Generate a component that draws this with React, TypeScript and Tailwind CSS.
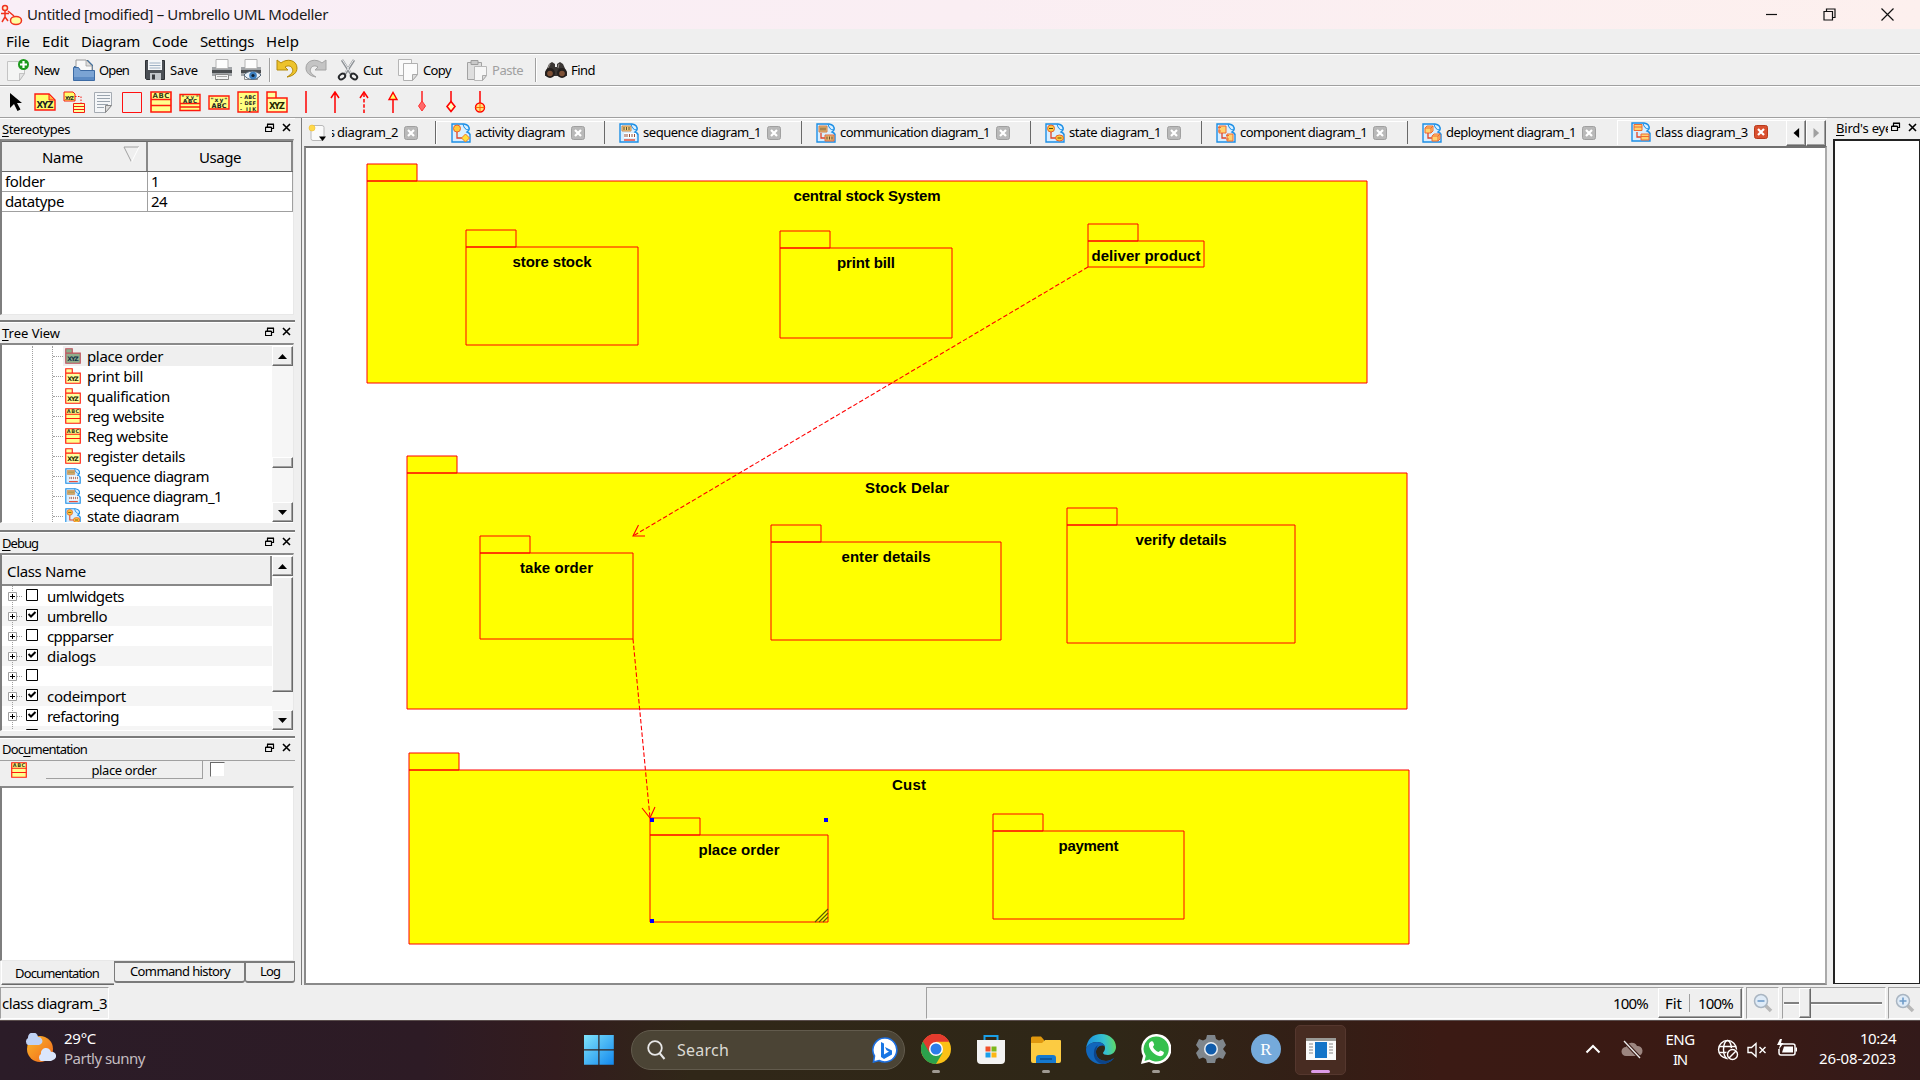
import React, { useLayoutEffect, useRef, useState } from "react";

/** Text run whose tracking is adjusted so that it fills a given width. */
function Fit({ w, children, className = "" }: { w: number; children: string; className?: string }) {
  const ref = useRef<HTMLSpanElement>(null);
  const [ls, setLs] = useState(0);
  useLayoutEffect(() => {
    if (ref.current) setLs((w - ref.current.getBoundingClientRect().width) / children.length);
  }, []);
  return (
    <span className={"block shrink-0 whitespace-pre " + className} style={{ width: w }}>
      <span ref={ref} style={{ letterSpacing: ls }}>{children}</span>
    </span>
  );
}

type SvgProps = { children: React.ReactNode; s?: number; vb?: string; className?: string };
function Svg({ children, s = 22, vb = "0 0 22 22", className = "" }: SvgProps) {
  return (
    <svg width={s} height={s} viewBox={vb} fill="none" className={"block shrink-0 " + className}>
      {children}
    </svg>
  );
}

/* ---------- toolbar icons ---------- */
const NewIcon = () => (
  <Svg>
    <path d="M.5 2.500h17v12l-5 7H.5z" fill="#f4f5f4" stroke="#c4c4c4" />
    <path d="M17.500 14.500h-5v7z" fill="#e4e4e4" stroke="#aaa" strokeWidth=".6" />
    <circle cx="16.500" cy="5.500" r="5.500" fill="#1c9a1c" />
    <path d="M16.500 2v7M13 5.500h7" stroke="#fff" strokeWidth="2.200" />
  </Svg>
);
const OpenIcon = () => (
  <Svg>
    <path d="M1 7h5V1h9l5 5v9H1z" fill="#41719f" />
    <path d="M3 11V1h10l6 6v6z" fill="#f8f8f8" stroke="#9a9a9a" />
    <path d="M13 1v6h6z" fill="#ddd" stroke="#999" strokeWidth=".7" />
    <path d="M.5 21.500V8.500h5l2 3h14v10z" fill="#7ba4d4" stroke="#3d6ba4" />
    <path d="M1 18h20v3H1z" fill="#5c8bc4" />
  </Svg>
);
const SaveIcon = () => (
  <Svg>
    <path d="M1.500 1.500h19v19h-18l-1-1z" fill="#4b4f55" stroke="#2e3135" />
    <path d="M4 1h14v10H4z" fill="#f4f6f8" />
    <path d="M5.500 4h11M5.500 6.500h11M5.500 9h11" stroke="#9db0c4" />
    <path d="M6 14h11v7H6z" fill="#c3c7cc" />
    <path d="M8 15.500h3v5H8z" fill="#3a3d42" />
  </Svg>
);
const Printer = () => (
  <>
    <path d="M5 .5h12v9H5z" fill="#fdfdfd" stroke="#b4b4b4" />
    <path d="M1 8h4v2h12V8h4v9H1z" fill="#a2a5a8" />
    <path d="M1 11h20v3H1z" fill="#4a4d50" />
    <path d="M4.500 15.500h13v5h-13z" fill="#f3f3f3" stroke="#888" />
    <path d="M6 17.500h10" stroke="#aaa" />
  </>
);
const PrintIcon = () => <Svg><Printer /></Svg>;
const PreviewIcon = () => (
  <Svg>
    <Printer />
    <path d="M4 16c4-5 12-5 17 0-5 6-13 6-17 0z" fill="#e8f0f8" stroke="#567" />
    <circle cx="13" cy="16.500" r="3.800" fill="#3c7fc0" /><circle cx="13" cy="16.500" r="1.600" fill="#123" />
  </Svg>
);
const UndoIcon = ({ gray }: { gray?: boolean }) => (
  <Svg className={gray ? "-scale-x-100" : ""}>
    <path d="M1 1l4 3c6-5 16-3 16 5 0 5-4 8-10 9 5-3 7-6 5-9-1-2-4-3-7-1l3 3H1z" fill={gray ? "#c4c4c4" : "#edc32c"} stroke={gray ? "#a4a4a4" : "#b48a0c"} />
  </Svg>
);
const CutIcon = () => (
  <Svg>
    <path d="M5 1l9 14M17 1L8 15" stroke="#8f9397" strokeWidth="2.600" />
    <path d="M5.500 1l8.500 13M16.500 1L8 14" stroke="#e8eaec" strokeWidth="1" />
    <ellipse cx="5" cy="17.500" rx="3.400" ry="2.500" stroke="#26282b" strokeWidth="2" transform="rotate(-35 5 17.500)" />
    <ellipse cx="17" cy="17.500" rx="3.400" ry="2.500" stroke="#26282b" strokeWidth="2" transform="rotate(35 17 17.500)" />
  </Svg>
);
const CopyIcon = () => (
  <Svg>
    <path d="M1.500 .5h13v16h-13z" fill="#fafafa" stroke="#b5b5b5" />
    <path d="M6.500 4.500h14v11l-5 6h-9z" fill="#fbfbfb" stroke="#b0b0b0" />
    <path d="M20.500 15.500h-5v6z" fill="#ddd" stroke="#aaa" />
  </Svg>
);
const PasteIcon = () => (
  <Svg>
    <path d="M1.500 3.500h14v17h-14z" fill="#dedede" stroke="#a2a2a2" />
    <path d="M5 1.500h7v4H5z" fill="#c9c9c9" stroke="#9c9c9c" />
    <path d="M8.500 7.500h12v9l-4 5h-8z" fill="#f6f6f6" stroke="#b8b8b8" />
    <path d="M20.500 16.500h-4v5z" fill="#ddd" stroke="#aaa" />
  </Svg>
);
const FindIcon = () => (
  <Svg>
    <path d="M4 5l3-2 3 2v3h2V5l3-2 3 2 4 9v3H0v-3z" fill="#3a3634" />
    <circle cx="5" cy="14" r="5" fill="#241f1d" /><circle cx="17" cy="14" r="5" fill="#241f1d" />
    <circle cx="5" cy="14.500" r="2.800" fill="#7e5136" /><circle cx="17" cy="14.500" r="2.800" fill="#7e5136" />
    <path d="M5 5l-2 4M14 5l-1 4" stroke="#99928e" />
  </Svg>
);

const tiny = "font-['DejaVu_Sans'] font-bold";
const Pkg = ({ s = 22, sel }: { s?: number; sel?: boolean }) => (
  <Svg s={s}>
    <path d="M1 1h9v6H1zM1 7h20v14H1z" fill={sel ? "#8fae8c" : "#ffff9c"} stroke={sel ? "#c0505c" : "#ff1a0e"} strokeWidth="1.500" />
    <text x="11" y="18" textAnchor="middle" fontSize="8.500" textLength="16" fill={sel ? "#123048" : "#2a2a00"} className={tiny}>XYZ</text>
  </Svg>
);
const Cls = ({ s = 22 }: { s?: number }) => (
  <Svg s={s}>
    <path d="M1 1h20v20H1z" fill="#ffff8c" stroke="#ff1a0e" strokeWidth="1.600" />
    <path d="M1 8.500h20M1 14.500h20" stroke="#ff1a0e" strokeWidth="1.400" />
    <text x="11" y="7.300" textAnchor="middle" fontSize="7" textLength="17" fill="#3a3a10" className={tiny}>ABC</text>
  </Svg>
);
const Note = () => (
  <>
    <path d="M1 3h14l6 6v10H1z" fill="#ffff6a" stroke="#ff1b12" strokeWidth="1.400" />
    <path d="M15 3v6h6z" fill="#ffb347" stroke="#ff1b12" />
  </>
);

const shapeTools: React.ReactNode[] = [
  <Svg key="a"><path d="M5 2v15l4-4 3.500 7 3-1.500-3.500-6.500h5z" fill="#000" /></Svg>,
  <Svg key="b"><Note /><text x="11" y="17" textAnchor="middle" fontSize="8.500" textLength="17" fill="#222" className={tiny}>XYZ</text></Svg>,
  <Svg key="c">
    <path d="M1 1h9l2 2v7H1z" fill="#ffff6a" stroke="#f51b12" />
    <text x="6.500" y="8.500" textAnchor="middle" fontSize="5" textLength="9" fill="#222" className={tiny}>XYZ</text>
    <path d="M12 5.500h6v7" stroke="#f51b12" strokeDasharray="1.500 1.500" />
    <path d="M10.500 12.500h11v9h-11zM10.500 15.500h11M10.500 18.500h11" fill="#ffff9a" stroke="#f51b12" />
  </Svg>,
  <Svg key="d">
    <path d="M2.500 1.500h17v13l-6 7h-11z" fill="#f4f6f8" stroke="#a5abb2" />
    <path d="M5 4.500h13M5 7.500h13M5 10.500h13M5 13.500h11M5 16.500h7" stroke="#9aa4ae" />
    <path d="M19.500 14.500h-6v7z" fill="#ddd" stroke="#888" />
  </Svg>,
  <Svg key="e"><path d="M1.500 1.500h19v20h-19z" stroke="#ff1010" /></Svg>,
  <Cls key="f" />,
  <Svg key="g">
    <path d="M1 3.500h20v16H1zM1 12.500h20M1 16h20" fill="#ffff80" stroke="#ff1a0e" strokeWidth="1.400" />
    <text x="11" y="8" textAnchor="middle" fontSize="5" textLength="17" fill="#222" className={tiny}>"xy"</text>
    <text x="11" y="12" textAnchor="middle" fontSize="5.500" textLength="14" fill="#222" className={tiny}>ABC</text>
  </Svg>,
  <Svg key="h">
    <path d="M1 5h20v13H1z" fill="#ffff80" stroke="#ff1a0e" strokeWidth="1.400" />
    <text x="11" y="11" textAnchor="middle" fontSize="6" textLength="17" fill="#222" className={tiny}>"xy"</text>
    <text x="11" y="17" textAnchor="middle" fontSize="6.500" textLength="15" fill="#222" className={tiny}>ABC</text>
  </Svg>,
  <Svg key="i">
    <path d="M1 1h20v20H1z" fill="#ffff80" stroke="#ff1a0e" strokeWidth="1.400" />
    <text x="3" y="7.500" fontSize="5" textLength="16" fill="#222" className={tiny}>- ABC</text>
    <text x="3" y="13.500" fontSize="5" textLength="16" fill="#222" className={tiny}>- DEF</text>
    <text x="3" y="19.500" fontSize="5" textLength="16" fill="#222" className={tiny}>- IJK</text>
  </Svg>,
  <Pkg key="j" />,
  <Svg key="k"><path d="M11 0v22" stroke="#f00" strokeWidth="1.500" /></Svg>,
  <Svg key="l"><path d="M11 22V1M7 7l4-6 4 6" stroke="#f00" strokeWidth="1.500" /></Svg>,
  <Svg key="m"><path d="M11 22V1" stroke="#f00" strokeWidth="1.500" strokeDasharray="3.500 1.800" /><path d="M7 7l4-6 4 6" stroke="#f00" strokeWidth="1.500" /></Svg>,
  <Svg key="n"><path d="M11 22V8" stroke="#f00" strokeWidth="1.500" /><path d="M7 8.500l4-7 4 7z" fill="#ffff6a" stroke="#f00" strokeWidth="1.400" /></Svg>,
  <Svg key="o"><path d="M11 0v12" stroke="#f00" strokeWidth="1.300" /><path d="M11 10l3.500 5-3.500 5-3.500-5z" fill="#ff6b6b" stroke="#f33" /></Svg>,
  <Svg key="p"><path d="M11 0v11" stroke="#f00" strokeWidth="1.500" /><path d="M11 10.500l4 5-4 5-4-5z" fill="#ffffc0" stroke="#f00" strokeWidth="1.600" /></Svg>,
  <Svg key="q"><path d="M11 0v12" stroke="#f00" strokeWidth="1.500" /><circle cx="11" cy="16.500" r="4.500" fill="#ffe27a" stroke="#f00" strokeWidth="1.400" /><path d="M11 12v9M6.500 16.500h9" stroke="#f60" /></Svg>,
];

/* ---------- diagram document icons ---------- */
type Kind = "activity" | "sequence" | "communication" | "state" | "component" | "deployment" | "class";
function DiagramIcon({ kind, s = 20 }: { kind: Kind; s?: number }) {
  return (
    <Svg s={s} vb="0 0 20 20">
      <path d="M1 1h12q6 1 5 6l-2 2q3 1 3 3v7H1z" fill="#d9efff" stroke="#1d8fe6" strokeWidth="1.400" />
      <path d="M12 1q1 6 6 6l-2 2q3 1 3 3" stroke="#1d8fe6" fill="#9fd3ff" />
      {(kind === "activity" || kind === "state") && (
        <>
          <circle cx="6" cy="5.500" r="3.500" fill="#ffc93a" stroke="#e8622c" />
          <path d="M6 9v6h5" stroke="#e0442a" strokeWidth="1.300" />
          {kind === "activity" ? <path d="M14.500 11l4 4-4 4-4-4z" fill="#ffe03a" stroke="#f0782c" /> : <ellipse cx="14.500" cy="15" rx="4" ry="3" fill="#ffc93a" stroke="#e8622c" />}
          {kind === "state" && <path d="M4 5.500h4M12.500 15h4" stroke="#5b4b10" />}
        </>
      )}
      {kind === "sequence" && (
        <>
          <path d="M3 3h9v5H3z" fill="#f5cf7a" stroke="#c98a52" /><path d="M5 4v3M7.500 4v3M10 4v3" stroke="#5b4b30" />
          <path d="M5 10h12v5H5z" fill="#fff" /><path d="M6 11v3M8 11v3M10.500 11v3M13 11v3M15.500 11v3" stroke="#93503f" />
          <path d="M5 17h11" stroke="#e8503a" strokeWidth="1.500" />
        </>
      )}
      {kind === "communication" && (
        <>
          <path d="M3 3h8v6H3z" fill="#e8b870" stroke="#d08050" /><path d="M5 4.500v3M7 4.500v3M9 4.500v3" stroke="#665030" />
          <path d="M5 10v5h4" stroke="#e0442a" strokeWidth="1.300" /><path d="M9 12h9v6H9z" fill="#e8b870" stroke="#e06a40" /><path d="M11 13.500v3M13.500 13.500v3M16 13.500v3" stroke="#665030" />
        </>
      )}
      {(kind === "component" || kind === "deployment" || kind === "class") && (
        <>
          <path d={kind === "component" ? "M3 3h7v7H3zM2 4.500h3M2 8h3" : kind === "deployment" ? "M3 5l2-2h6v5l-2 2H3zM3 5h6v5M9 5l2-2" : "M3 2.500h8v6H3zM3 5h8"} fill="#ffd36e" stroke="#ee6a35" />
          <path d="M6 10v5h4" stroke="#e0442a" strokeWidth="1.300" />
          <path d={kind === "component" ? "M11 11h6v7h-6zM10 12.500h3M10 16h3" : kind === "deployment" ? "M10 13l2-2h6v5l-2 2h-6zM10 13h6v5M16 13l2-2" : "M10 12h8v6h-8zM10 14.500h8"} fill="#ffd36e" stroke="#ee6a35" />
        </>
      )}
    </Svg>
  );
}

/* ---------- dock helpers ---------- */
const RestoreGlyph = () => (
  <Svg s={10} vb="0 0 10 10"><path d="M2.500 4V1.500h6v4H7M2 1h7" stroke="#000" strokeWidth="1.200" /><path d="M.500 4.500h6v4h-6zM.500 4h6" stroke="#000" strokeWidth="1.200" /></Svg>
);
const CloseGlyph = () => <Svg s={9} vb="0 0 9 9"><path d="M1 1l7 7M8 1L1 8" stroke="#000" strokeWidth="1.600" /></Svg>;

function DockTitle({ text, hot, w }: { text: string; hot: number; w: number }) {
  const ref = useRef<HTMLSpanElement>(null);
  const [ls, setLs] = useState(0);
  useLayoutEffect(() => {
    if (ref.current) setLs((w - ref.current.getBoundingClientRect().width) / text.length);
  }, []);
  return (
    <div className="flex h-[20px] shrink-0 items-center pl-[2px] text-[13px] leading-[20px]">
      <span className="whitespace-pre" style={{ width: w }}>
        <span ref={ref} style={{ letterSpacing: ls }}>
          {text.slice(0, hot)}<span className="underline underline-offset-2">{text[hot]}</span>{text.slice(hot + 1)}
        </span>
      </span>
      <div className="ml-auto flex items-center gap-[7px] pr-[4px] pb-[3px]"><RestoreGlyph /><CloseGlyph /></div>
    </div>
  );
}
const Split = () => <div className="h-[3px] shrink-0 border-t-2 border-[#7b7b7b] bg-white" />;
const raised = "border border-t-white border-l-white border-r-[#696969] border-b-[#696969] shadow-[inset_-1px_-1px_0_#a0a0a0] bg-[#efefef]";
const sunken = "border border-t-[#a0a0a0] border-l-[#a0a0a0] border-r-white border-b-white";

function ScrollBar({ before, thumb }: { before: string; thumb: string }) {
  return (
    <div className="flex w-[21px] shrink-0 flex-col bg-[#f6f6f6]">
      <div className={"flex h-[20px] items-center justify-center " + raised}><Svg s={9} vb="0 0 9 9"><path d="M0 7l4.500-5L9 7z" fill="#000" /></Svg></div>
      <div className={before} />
      <div className={raised + " " + thumb} />
      <div className="flex-1" />
      <div className={"flex h-[20px] items-center justify-center " + raised}><Svg s={9} vb="0 0 9 9"><path d="M0 2l4.500 5L9 2z" fill="#000" /></Svg></div>
    </div>
  );
}

const tree: [string, number, React.ReactNode][] = [
  ["place order", 76, <Pkg s={16} sel />],
  ["print bill", 56, <Pkg s={16} />],
  ["qualification", 83, <Pkg s={16} />],
  ["reg website", 77, <Cls s={16} />],
  ["Reg website", 81, <Cls s={16} />],
  ["register details", 98, <Pkg s={16} />],
  ["sequence diagram", 122, <DiagramIcon kind="sequence" s={16} />],
  ["sequence diagram_1", 135, <DiagramIcon kind="sequence" s={16} />],
  ["state diagram", 92, <DiagramIcon kind="state" s={16} />],
];
const debugRows: [string, number, boolean][] = [
  ["umlwidgets", 77, false], ["umbrello", 60, true], ["cppparser", 66, false], ["dialogs", 49, true],
  ["", 0, false], ["codeimport", 79, true], ["refactoring", 72, true], ["", 0, false],
];

function LeftDock() {
  return (
    <div className="flex w-[295px] shrink-0 flex-col">
      {/* Stereotypes */}
      <div className="h-px shrink-0 bg-white" />
      <DockTitle text="Stereotypes" hot={0} w={68} />
      <div className="mr-[1px] flex h-[176px] shrink-0 flex-col border-t-2 border-r border-b border-l-2 border-t-[#8a8a8a] border-r-[#e8e8e8] border-b-[#e8e8e8] border-l-[#7e7e7e] bg-white text-[15px]">
        <div className="h-px shrink-0 bg-[#696969]" />
        <div className="flex h-[30px] shrink-0 border-b border-[#696969]">
          <div className="flex w-[146px] items-center border-r-2 border-[#888] bg-[#efefef] pt-px pl-[40px]">
            <Fit w={41}>Name</Fit>
            <Svg s={17} vb="0 0 17 17" className="mb-[6px] ml-[40px]"><path d="M8.500 16L1 1h15" stroke="#a0a0a0" /><path d="M16 1L8.500 16" stroke="#fff" /></Svg>
          </div>
          <div className="flex flex-1 items-center border-r-2 border-[#888] bg-[#efefef] pt-px pl-[51px]"><Fit w={42}>Usage</Fit></div>
        </div>
        {([["folder", 40, "1", 8], ["datatype", 59, "24", 16]] as [string, number, string, number][]).map(([a, aw, b, bw]) => (
          <div key={a} className="flex h-[20px] shrink-0 border-b border-[#a0a0a0] leading-[18px]">
            <div className="w-[146px] border-r border-[#a0a0a0] pl-[3px]"><Fit w={aw}>{a}</Fit></div>
            <div className="flex-1 border-r border-[#a0a0a0] pl-[3px]"><Fit w={bw}>{b}</Fit></div>
          </div>
        ))}
      </div>
      <div className="h-[5px] shrink-0" />
      <Split />
      {/* Tree view */}
      <DockTitle text="Tree View" hot={0} w={58} />
      <div className="mr-[1px] flex h-[180px] shrink-0 border-t-2 border-l-2 border-r border-b border-t-[#8a8a8a] border-r-[#e8e8e8] border-b-[#fff] border-l-[#7e7e7e] bg-white pt-px text-[15px]">
        <div className="flex min-w-0 flex-1 overflow-hidden">
          <div className="ml-[30px] w-[20px] shrink-0 border-l border-dotted border-[#a0a0a0]" />
          <div className="flex-1 border-l border-dotted border-[#a0a0a0]">
            {tree.map(([t, w, icon], i) => (
              <div key={i} className="flex h-[20px] items-center leading-[20px]">
                <div className="w-[10px] border-t border-dotted border-[#a0a0a0]" />
                <div className={"flex h-full flex-1 items-center pl-[2px] " + (i === 0 ? "bg-[#efefef]" : "")}>
                  {icon}
                  <Fit w={w} className="ml-[6px]">{t}</Fit>
                </div>
              </div>
            ))}
          </div>
        </div>
        <ScrollBar before="h-[91px]" thumb="h-[11px]" />
      </div>
      <div className="h-[7px] shrink-0" />
      <Split />
      {/* Debug */}
      <DockTitle text="Debug" hot={0} w={36} />
      <div className="mr-[1px] flex h-[178px] shrink-0 border-t-2 border-l-2 border-r border-b border-t-[#8a8a8a] border-r-[#e8e8e8] border-b-[#fff] border-l-[#7e7e7e] bg-white pt-px text-[15px]">
        <div className="flex min-w-0 flex-1 flex-col overflow-hidden">
          <div className="flex h-[30px] shrink-0 items-center border-r-2 border-b-2 border-[#888] bg-[#efefef] pt-[2px] pl-[5px]"><Fit w={79}>Class Name</Fit></div>
          {debugRows.map(([t, w, on], i) => (
            <div key={i} className={"flex h-[20px] shrink-0 items-center leading-[20px] " + (i % 2 ? "bg-[#f5f5f5]" : "bg-white")}>
              <Svg s={20} vb="0 0 20 20">
                <path d="M10.500 0v20M15 10.500h5" stroke="#a0a0a0" strokeDasharray="1 1" />
                <path d="M6.500 6.500h8v8h-8z" fill="#fff" stroke="#a0a0a0" />
                <path d="M8 10.500h5M10.500 8v5" stroke="#000" />
              </Svg>
              <Svg s={12} vb="0 0 12 12" className="mb-[3px] ml-[4px]">
                <path d="M.500.500h11v11H.500z" fill="#fff" stroke="#000" />
                {on && <path d="M2.500 5l2.500 2.500L9.500 3" stroke="#000" strokeWidth="2" />}
              </Svg>
              {t ? <Fit w={w} className="ml-[9px]">{t}</Fit> : null}
            </div>
          ))}
        </div>
        <ScrollBar before="h-[1px]" thumb="h-[115px]" />
      </div>
      <div className="h-[5px] shrink-0" />
      <Split />
      {/* Documentation */}
      <DockTitle text="Documentation" hot={3} w={85} />
      <div className="mt-px flex h-[26px] shrink-0 items-start border-t border-[#a0a0a0] pl-[11px] text-[13px]">
        <div className="pt-px"><Cls s={16} /></div>
        <div className="ml-[19px] flex h-[18px] w-[157px] items-center justify-center border-r border-b border-[#a0a0a0] pt-[2px]"><Fit w={65}>place order</Fit></div>
        <div className="mt-px ml-[7px] h-[15px] w-[15px] border border-t-[#696969] border-r-[#eee] border-b-[#eee] border-l-[#696969] bg-white" />
      </div>
      <div className="mr-[1px] h-[175px] shrink-0 border-t-2 border-l-2 border-r border-b border-t-[#8a8a8a] border-r-[#e8e8e8] border-b-[#e8e8e8] border-l-[#7e7e7e] bg-white" />
      <div className="flex h-[24px] shrink-0 items-start pl-[1px] text-[13px]">
        <div className="flex h-[24px] w-[113px] items-center border-b border-l border-b-[#696969] border-l-white pt-[2px] pl-[13px] shadow-[inset_0_-1px_0_#a0a0a0]"><Fit w={84}>Documentation</Fit></div>
        <div className="flex h-[22px] w-[131px] items-center rounded-b-[3px] border-x border-t-2 border-b-2 border-[#7b7b7b] pl-[15px]"><Fit w={100}>Command history</Fit></div>
        <div className="flex h-[22px] flex-1 items-center rounded-b-[3px] border-x border-t-2 border-b-2 border-[#7b7b7b] pl-[14px]"><Fit w={20}>Log</Fit></div>
      </div>
    </div>
  );
}

/* ---------- tabs ---------- */
const tabs: [string, number, Kind, string][] = [
  ["activity diagram", 90, "activity", "w-[168px]"],
  ["sequence diagram_1", 118, "sequence", "w-[197px]"],
  ["communication diagram_1", 150, "communication", "w-[229px]"],
  ["state diagram_1", 92, "state", "w-[171px]"],
  ["component diagram_1", 127, "component", "w-[206px]"],
  ["deployment diagram_1", 130, "deployment", "w-[209px]"],
];
const TabClose = ({ red }: { red?: boolean }) => (
  <Svg s={14} vb="0 0 14 14">
    <rect x=".5" y=".5" width="13" height="13" rx="2" fill={red ? "#d9502f" : "#b9b9b9"} stroke={red ? "#b93a1c" : "#a0a0a0"} />
    <path d="M4 4l6 6M10 4l-6 6" stroke="#fff" strokeWidth="2.200" />
  </Svg>
);

/* ---------- diagram ---------- */
type Node = [string, number, number, number, number, number];
const nodes: Node[] = [
  ["central stock System", 367, 164, 1367, 383, 147],
  ["store stock", 466, 230, 638, 345, 79],
  ["print bill", 780, 231, 952, 338, 58],
  ["deliver product", 1088, 224, 1204, 267, 109],
  ["Stock Delar", 407, 456, 1407, 709, 84],
  ["take order", 480, 536, 633, 639, 73],
  ["enter details", 771, 525, 1001, 640, 89],
  ["verify details", 1067, 508, 1295, 643, 91],
  ["Cust", 409, 753, 1409, 944, 34],
  ["place order", 650, 818, 828, 922, 81],
  ["payment", 993, 814, 1184, 919, 60],
];
function Diagram() {
  return (
    <svg width="1518" height="834" viewBox="307 149 1518 834" className="block" fontFamily="'Liberation Sans', Arial, sans-serif">
      {nodes.map(([t, x, y, r, b, w]) => (
        <g key={t}>
          <path d={`M${x} ${y}h50v17h-50zM${x} ${y + 17}H${r}V${b}H${x}z`} fill="#ff0" stroke="#f00" />
          <text x={(x + r) / 2 - w / 2} y={y + 37} fontSize="15" fontWeight="bold" textLength={w}>{t}</text>
        </g>
      ))}
      <g stroke="#f00" strokeWidth="1.100" fill="none">
        <path d="M1088 267L633 536M633 639l17 179" strokeDasharray="4.500 2.200" />
        <path d="M638.500 525L633 536l12 0M642 808l8 10 5-11" />
      </g>
      <path d="M650 818h4v4h-4zM824 818h4v4h-4zM650 919h4v4h-4z" fill="#00f" />
      <path d="M815 922l13-13M819 922l9-9M823 922l5-5" stroke="#5c5c00" strokeWidth="1.200" />
    </svg>
  );
}

function Center() {
  return (
    <div className="ml-[6px] flex w-[1526px] shrink-0 flex-col border-l border-[#7b7b7b]">
      <div className="h-px shrink-0 bg-white" />
      <div className="flex h-[27px] shrink-0 items-center pl-px text-[13px]">
        <Svg s={20} vb="0 0 20 20" className="ml-[5px]">
          <rect x="3" y="2.500" width="13" height="15" rx="2" fill="#fafafa" stroke="#b8b8b8" />
          <circle cx="4" cy="5" r="3" fill="#ffd94a" stroke="#eebc2c" strokeWidth=".6" />
          <path d="M11 13.500h7L14.500 18z" fill="#000" />
        </Svg>
        <div className="ml-[4px] flex w-[3px] justify-end overflow-hidden pt-px"><span>s</span></div>
        <Fit w={61} className="ml-[2px] pt-px">diagram_2</Fit>
        <div className="ml-[6px]"><TabClose /></div>
        <div className="ml-[17px] h-[23px] w-[2px] border-l border-[#696969] bg-white" />
        {tabs.map(([t, w, k, cw], i) => (
          <div key={t} className={"flex h-[23px] shrink-0 items-center pl-[14px] " + cw + (i < 5 ? " border-r border-[#696969] shadow-[inset_0_1px_0_#fff]" : "")}>
            <DiagramIcon kind={k} />
            <Fit w={w} className="ml-[4px] pt-px">{t}</Fit>
            <div className="ml-[6px]"><TabClose /></div>
          </div>
        ))}
        <div className="flex h-[25px] w-[169px] shrink-0 items-center border-t border-l border-white pl-[13px] pb-[2px]">
          <DiagramIcon kind="class" />
          <Fit w={93} className="ml-[4px] pt-px">class diagram_3</Fit>
          <div className="ml-[6px]"><TabClose red /></div>
        </div>
        <div className={"flex h-[26px] w-[20px] shrink-0 items-center justify-center " + raised}><Svg s={10} vb="0 0 8 8"><path d="M6.500 0v8L2 4z" fill="#000" /></Svg></div>
        <div className={"flex h-[26px] w-[20px] shrink-0 items-center justify-center " + raised}><Svg s={10} vb="0 0 8 8"><path d="M2 0v8l4.500-4z" fill="#a0a0a0" /></Svg></div>
      </div>
      <div className="ml-[2px] flex-1 border-2 border-t-[#707070] border-r-[#aaa] border-b-[#8a8a8a] border-l-[#8a8a8a] bg-white pt-[1px] pl-[1px]">
        <Diagram />
      </div>
    </div>
  );
}

/* ---------- status bar ---------- */
const Mag = ({ plus }: { plus?: boolean }) => (
  <Svg s={20} vb="0 0 20 20">
    <path d="M12 12l6 6" stroke="#b8b8b8" strokeWidth="3.500" /><circle cx="8" cy="8" r="6.500" fill="#dfebf7" stroke="#a9b5c1" strokeWidth="1.500" />
    <path d={plus ? "M4.500 8h7M8 4.500v7" : "M4.500 8h7"} stroke="#6f9cc8" strokeWidth="1.600" />
  </Svg>
);

/* ---------- taskbar ---------- */
function Taskbar() {
  return (
    <div className="flex h-[60px] shrink-0 items-center border-t border-[#5a4d4c] bg-[linear-gradient(90deg,#2b1c28_0%,#2d1b25_22%,#331c1e_29%,#302718_36%,#2f2717_58%,#331f16_68%,#3b1a14_75%,#3a1a14_90%,#331a1a_100%)] pb-[1px] text-white">
      <Svg s={32} vb="0 0 32 32" className="mb-[2px] ml-[24px]">
        <defs><linearGradient id="sun" x2="1" y2="1"><stop stopColor="#fbb829" /><stop offset="1" stopColor="#f0661c" /></linearGradient></defs>
        <circle cx="16" cy="16" r="13" fill="url(#sun)" />
        <path d="M4 12a4 4 0 010-7 5 5 0 0110-1 4 4 0 013 7l-2 1z" fill="#bfd2f5" />
        <path d="M17 28a4 4 0 010-7 5 5 0 0110-2 4 4 0 012 8l-2 1z" fill="#dbe6fb" />
      </Svg>
      <div className="ml-[8px] flex w-[120px] flex-col pb-[4px] text-[15px] leading-[20px]">
        <Fit w={32}>29°C</Fit>
        <Fit w={81} className="text-[#c4bcc0]">Partly sunny</Fit>
      </div>
      <Svg s={30} vb="0 0 30 30" className="ml-[400px]">
        <defs><linearGradient id="win" x2="1" y2="1"><stop stopColor="#7fe3fb" /><stop offset="1" stopColor="#1288ee" /></linearGradient></defs>
        <path d="M0 0h14.300v14.300H0zM15.500 0h14.300v14.300H15.500zM0 15.500h14.300v14.300H0zM15.500 15.500h14.300v14.300H15.500z" fill="url(#win)" />
      </Svg>
      <div className="ml-[17px] flex h-[40px] w-[274px] shrink-0 items-center rounded-full border border-[#625b4d] bg-[#4b4435] pl-[14px]">
        <Svg s={20} vb="0 0 20 20"><circle cx="9" cy="8" r="6.800" stroke="#e8e8e8" strokeWidth="1.800" /><path d="M13.500 13l5 6" stroke="#e8e8e8" strokeWidth="2" /></Svg>
        <Fit w={52} className="ml-[11px] text-[16px] text-[#dcdad4]">Search</Fit>
        <Svg s={26} vb="0 0 26 26" className="ml-auto mr-[6px]">
          <path d="M13 1a12 12 0 11-6 22.500L1.500 25l1-6A12 12 0 0113 1z" fill="#fff" stroke="#1d6fe0" strokeWidth="1.600" />
          <path d="M9 5l3 1.500v11l5-3-2.500-1.200L13 10l7 3.500v4L12 22l-3-2z" fill="#1976e4" />
        </Svg>
      </div>
      <div className="ml-[5px] flex h-full items-center">
        {apps.map((a, i) => (
          <div key={i} className={"mr-[4px] flex h-[50px] w-[51px] flex-col items-center rounded-[5px] pt-[8px] " + (i === 7 ? "border border-[#55372e] bg-[#482c22]" : "border border-transparent")}>
            {a}
            {(i === 0 || i === 2 || i === 4) && <div className="mt-[6px] h-[3px] w-[8px] rounded-full bg-[#a09a92]" />}
            {i === 7 && <div className="mt-[6px] h-[3px] w-[19px] rounded-full bg-[#dc9be8]" />}
          </div>
        ))}
      </div>
      <Svg s={16} vb="0 0 16 16" className="mb-[2px] ml-auto"><path d="M1.500 11.500L8 5l6.500 6.500" stroke="#fff" strokeWidth="2" /></Svg>
      <Svg s={22} vb="0 0 22 22" className="mb-[2px] ml-[20px]"><path d="M5 18a4.500 4.500 0 010-9 6 6 0 0111-1 5 5 0 011 10z" fill="#9c8680" /><path d="M3 3l16 17" stroke="#3a1a14" strokeWidth="3.500" /><path d="M3 3l16 17" stroke="#eee" strokeWidth="1.300" /></Svg>
      <div className="ml-[22px] flex w-[30px] flex-col items-center pb-[2px] text-[15px] leading-[20px]"><Fit w={29}>ENG</Fit><Fit w={14}>IN</Fit></div>
      <Svg s={22} vb="0 0 22 22" className="ml-[22px]">
        <g stroke="#fff" strokeWidth="1.400"><circle cx="10.500" cy="10.500" r="9" /><ellipse cx="10.500" cy="10.500" rx="4" ry="9" /><path d="M2 7.500h17M2 13.500h17" /></g>
        <circle cx="15.500" cy="15.500" r="6.500" fill="#3a1a14" /><g stroke="#fff" strokeWidth="1.400"><circle cx="15.500" cy="15.500" r="5" /><path d="M12 19l7-7" /></g>
      </Svg>
      <Svg s={20} vb="0 0 20 20" className="ml-[8px]"><path d="M1 7.500h3.500L9 3.500v13l-4.500-4H1zM12.500 7l6 6M18.500 7l-6 6" stroke="#fff" strokeWidth="1.400" /></Svg>
      <Svg s={22} vb="0 0 22 22" className="mb-[2px] ml-[9px]"><path d="M4 6h13q2 0 2 2v7q0 2-2 2H5q-2 0-2-2v-4" stroke="#fff" strokeWidth="1.500" /><path d="M8 8.500h9v6H6z" fill="#fff" /><path d="M19.500 9.500h1.500v4h-1.500z" fill="#fff" /><path d="M4 1L1 7h3l-1.500 5L7.500 5H5l1-4z" fill="#fff" /></Svg>
      <div className="mr-[24px] ml-[21px] flex flex-col items-end pb-[4px] text-[15px] leading-[20px]"><Fit w={36}>10:24</Fit><Fit w={77}>26-08-2023</Fit></div>
    </div>
  );
}
const appVb = "0 0 30 30";
const apps: React.ReactNode[] = [
  <Svg s={30} vb={appVb}>
    <circle cx="15" cy="15" r="15" fill="#fbc116" /><path d="M15 15L2 7.500A15 15 0 0128 7.500H15z" fill="#e33b2e" /><path d="M15 15L2 7.500A15 15 0 0015 30l6.500-11z" fill="#2ba24c" /><path d="M15 7.500h13A15 15 0 002 7.500l6.500 11z" fill="#e33b2e" />
    <circle cx="15" cy="15" r="7" fill="#fff" /><circle cx="15" cy="15" r="5.500" fill="#2a7de9" />
  </Svg>,
  <Svg s={30} vb={appVb}>
    <path d="M8.500 8V2h13v6" stroke="#1aa0e8" strokeWidth="2" /><path d="M1 6h28v20q0 4-4 4H5q-4 0-4-4z" fill="#f3f3f3" />
    <path d="M9.500 12.500h5v5h-5z" fill="#f0502a" /><path d="M15.500 12.500h5v5h-5z" fill="#7db71a" /><path d="M9.500 18.500h5v5h-5z" fill="#1aa0ea" /><path d="M15.500 18.500h5v5h-5z" fill="#fcb714" />
  </Svg>,
  <Svg s={30} vb={appVb}>
    <path d="M0 4q0-1.500 1.500-1.500H10l3 3.500v4H0z" fill="#e0980e" /><path d="M0 9h11l3-3h15q1 0 1 1v20q0 2-2 2H2q-2 0-2-2z" fill="#fccb42" />
    <path d="M5 29v-5q0-3 3-3h14q3 0 3 3v5z" fill="#1579cf" /><path d="M9 25h12" stroke="#0b4c8c" strokeWidth="1.500" />
  </Svg>,
  <Svg s={30} vb={appVb}>
    <defs><linearGradient id="edge" x1="0" y1=".3" x2="1" y2=".2"><stop stopColor="#1b8fe0" /><stop offset=".6" stopColor="#35c1d0" /><stop offset="1" stopColor="#62dc5c" /></linearGradient></defs>
    <path d="M0 15C1 5 7 0 15 0c9 0 15 6 15 13 0 5-4 8-8 8-3 0-5-1-5-2s2-2 2-5c0-4-4-6-8-6C6 8 1 11 0 15z" fill="url(#edge)" />
    <path d="M0 15c1-4 5-7 11-7 4 0 7 2 8 4-5-2-9 2-9 6 0 6 5 9 10 9 3 0 5-1 8-3-3 4-8 6-13 6C6 30 0 23 0 15z" fill="#1166bb" />
    <path d="M10 18c0 6 5 9 10 9 3 0 5-1 8-3-3 4-8 6-12 6-5-1-9-6-8-12 0-3 1-5 4-7-1 2-2 4-2 7z" fill="#0c448a" />
  </Svg>,
  <Svg s={30} vb={appVb}>
    <path d="M15 0a15 15 0 11-7 28L0 30l2-8A15 15 0 0115 0z" fill="#fff" /><path d="M15 2.500a12.500 12.500 0 11-6.500 23L3.500 27l1.300-5A12.500 12.500 0 0115 2.500z" fill="#35c04e" />
    <path d="M10 7.500c1-.5 2 0 2.200.6l1 2.700c0 .8-1.400 1.700-1.200 2.200 1.200 2.500 3 4 5.300 5 .7.200 1.700-1.700 2.400-1.500l3 1.500c.5.500 0 3-1.800 3.800-5 2-13-5.500-13-11 0-1.700 1-2.900 2.100-3.300z" fill="#fff" />
  </Svg>,
  <Svg s={30} vb={appVb}>
    <path d="M11 1h8l1 4 3 1.500L27 5l3 6-3 4 3 4-3 6-4-1.500L20 25l-1 4h-8l-1-4-3-1.500L3 25l-3-6 3-4-3-4 3-6 4 1.500L10 5z" fill="#7f868c" /><circle cx="15" cy="15" r="7" fill="#e9eef3" /><circle cx="15" cy="15" r="5.500" fill="#105cab" />
  </Svg>,
  <Svg s={30} vb={appVb}><circle cx="15" cy="15" r="15" fill="#75aadb" /><text x="15" y="20.500" fontSize="17" textAnchor="middle" fill="#fff" className="font-['Liberation_Serif']">R</text></Svg>,
  <Svg s={30} vb={appVb}>
    <path d="M0 4h30v22H0z" fill="#fafafa" /><path d="M0 4h30v3H0z" fill="#9a9a96" /><path d="M9 8h12v16H9z" fill="#1374c8" />
    <path d="M3 10h4M3 13h4M3 16h4M3 19h4M23 10h4M23 13h4M23 16h4M23 19h4" stroke="#888" strokeWidth="1.200" />
  </Svg>,
];

const menus: [string, number][] = [["File", 24], ["Edit", 27], ["Diagram", 59], ["Code", 36], ["Settings", 54], ["Help", 33]];
const ToolSep = ({ className }: { className: string }) => <div className={"h-[24px] w-[2px] border-r border-l border-l-[#a0a0a0] border-r-white " + className} />;

export default function App() {
  return (
    <div className="flex h-[1080px] w-[1920px] flex-col overflow-hidden bg-[#efefef] font-['Noto_Sans',sans-serif] text-black">
      {/* window title */}
      <div className="flex h-[29px] shrink-0 items-center bg-[linear-gradient(90deg,#f9eef7,#faeef3_50%,#fdf0ee)]">
        <Svg s={22} vb="0 0 22 22" className="ml-[1px]">
          <g stroke="#f0321e" strokeWidth="1.500"><circle cx="4" cy="4" r="2.500" fill="#fff0d0" /><path d="M4 6.500V13l-3 5M4 13l3 4M0 9.500h8M7 7l6 5" /><ellipse cx="15" cy="16.500" rx="5.500" ry="4" fill="#ffffa0" /></g>
        </Svg>
        <Fit w={301} className="ml-[4px] text-[15px] text-[#1a1a1a]">Untitled [modified] – Umbrello UML Modeller</Fit>
        <div className="mr-[26px] ml-auto flex items-center gap-[45px]">
          <Svg s={13} vb="0 0 13 13"><path d="M1 6.500h11" stroke="#111" strokeWidth="1.200" /></Svg>
          <Svg s={13} vb="0 0 13 13"><path d="M1 3.500h8.500V12H1zM3.500 3V1H12v8.500H10" stroke="#111" strokeWidth="1.200" /></Svg>
          <Svg s={13} vb="0 0 13 13"><path d="M.500.500l12 12M12.500.500l-12 12" stroke="#111" strokeWidth="1.200" /></Svg>
        </div>
      </div>
      {/* menu */}
      <div className="flex h-[25px] shrink-0 items-center gap-[12px] border-b border-[#a0a0a0] pl-[6px] text-[15px] leading-[24px]">
        {menus.map(([t, w]) => <Fit key={t} w={w}>{t}</Fit>)}
      </div>
      {/* main toolbar */}
      <div className="flex h-[32px] shrink-0 items-center border-t border-b border-t-white border-b-[#a0a0a0] pl-[7px] text-[13px]">
        <NewIcon /><Fit w={25} className="ml-[5px] pt-[2px]">New</Fit>
        <div className="ml-[14px]"><OpenIcon /></div><Fit w={30} className="ml-[4px] pt-[2px]">Open</Fit>
        <div className="ml-[15px]"><SaveIcon /></div><Fit w={28} className="ml-[4px] pt-[2px]">Save</Fit>
        <div className="ml-[13px]"><PrintIcon /></div>
        <div className="ml-[7px]"><PreviewIcon /></div>
        <ToolSep className="ml-[7px]" />
        <div className="ml-[5px]"><UndoIcon /></div>
        <div className="ml-[7px]"><UndoIcon gray /></div>
        <div className="ml-[10px]"><CutIcon /></div><Fit w={19} className="ml-[4px] pt-[2px]">Cut</Fit>
        <div className="ml-[15px]"><CopyIcon /></div><Fit w={28} className="ml-[4px] pt-[2px]">Copy</Fit>
        <div className="ml-[15px]"><PasteIcon /></div><Fit w={31} className="ml-[4px] pt-[2px] text-[#a0a0a0]">Paste</Fit>
        <ToolSep className="ml-[12px]" />
        <div className="ml-[8px]"><FindIcon /></div><Fit w={24} className="ml-[4px] pt-[2px]">Find</Fit>
      </div>
      {/* shape toolbar */}
      <div className="flex h-[32px] shrink-0 items-center gap-[7px] border-t border-b border-t-white border-b-[#a0a0a0] pl-[5px]">{shapeTools}</div>
      {/* work area */}
      <div className="flex h-[867px] shrink-0">
        <LeftDock />
        <Center />
        <div className="ml-[6px] flex min-w-0 flex-1 flex-col">
          <div className="flex h-[21px] items-center pl-[3px] text-[13px]">
            <div className="w-[52px] overflow-hidden whitespace-pre tracking-[-0.2px]"><span className="underline underline-offset-2">B</span>ird's eye</div>
            <div className="mb-[3px] ml-[3px] flex items-center gap-[7px]"><RestoreGlyph /><CloseGlyph /></div>
          </div>
          <div className="mb-px flex-1 border-2 border-r border-b border-[#222] bg-white" />
        </div>
      </div>
      {/* status bar */}
      <div className="flex h-[35px] shrink-0 items-start pt-[2px] text-[15px]">
        <div className={"flex h-[32px] w-[109px] items-center pl-[1px] " + sunken}><Fit w={105}>class diagram_3</Fit></div>
        <div className={"ml-[817px] flex h-[32px] w-[818px] items-center justify-end pr-[1px] " + sunken}>
          <Fit w={35} className="mr-[10px]">100%</Fit>
          <div className={"flex h-[30px] w-[84px] items-center " + raised}>
            <Fit w={17} className="ml-[6px]">Fit</Fit>
            <div className="ml-[7px] h-[18px] w-px bg-[#a0a0a0]" />
            <Fit w={35} className="ml-[8px]">100%</Fit>
          </div>
        </div>
        <div className={"ml-[2px] flex h-[32px] w-[33px] items-center justify-center " + sunken}><Mag /></div>
        <div className={"ml-[3px] flex h-[32px] w-[104px] items-center " + sunken}>
          <div className="ml-[1px] h-[3px] w-[15px] border-t-2 border-b border-t-[#808080] border-b-white" />
          <div className={"h-[30px] w-[12px] " + raised} />
          <div className="h-[3px] w-[71px] border-t-2 border-b border-t-[#808080] border-b-white" />
        </div>
        <div className={"ml-[2px] flex h-[32px] flex-1 items-center border-r-0 pl-[6px] " + sunken}><Mag plus /></div>
      </div>
      <Taskbar />
    </div>
  );
}
